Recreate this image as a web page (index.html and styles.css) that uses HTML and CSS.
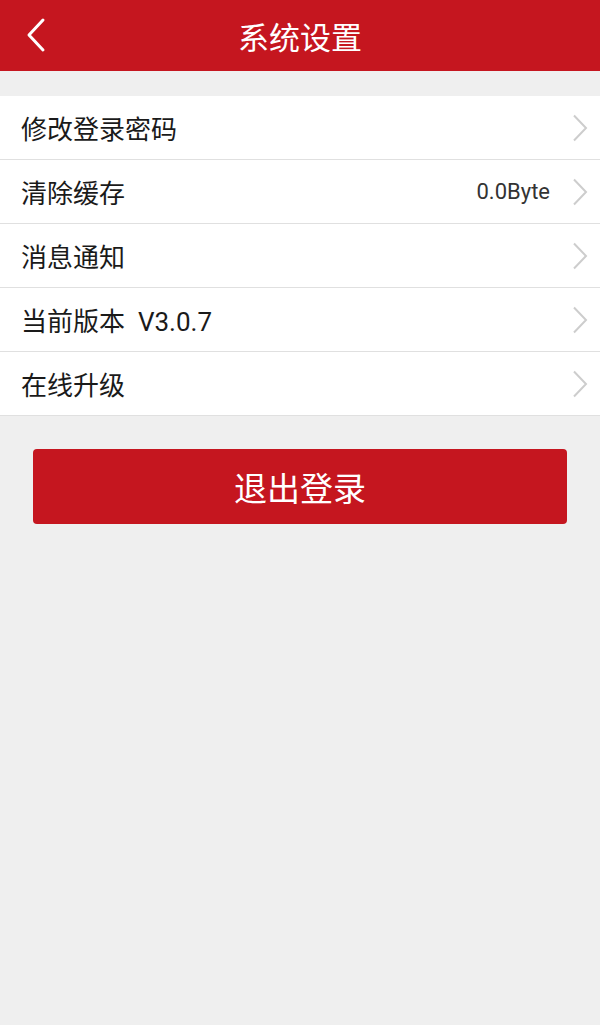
FILE: index.html
```html
<!DOCTYPE html>
<html lang="zh-CN">
<head>
    <meta charset="UTF-8">
    <meta name="viewport" content="width=device-width, initial-scale=1.0">
    <title>系统设置</title>
    <link rel="stylesheet" href="styles.css">
</head>
<body>
    <div class="header">
        <span class="back">
            <svg width="24" height="36" viewBox="0 0 24 36"><path d="M19 3 L5 18 L19 33" fill="none" stroke="#fff" stroke-width="3" stroke-linecap="round" stroke-linejoin="round"/></svg>
        </span>
        <h1>系统设置</h1>
    </div>

    <div class="list">
        <div class="row"><span class="label">修改登录密码</span><svg class="arrow" width="16" height="28" viewBox="0 0 16 28"><path d="M2 1.5 L14 14 L2 26.5" fill="none" stroke="#cdcdcd" stroke-width="2"/></svg></div>
        <div class="row"><span class="label">清除缓存</span><span class="value">0.0Byte</span><svg class="arrow" width="16" height="28" viewBox="0 0 16 28"><path d="M2 1.5 L14 14 L2 26.5" fill="none" stroke="#cdcdcd" stroke-width="2"/></svg></div>
        <div class="row"><span class="label">消息通知</span><svg class="arrow" width="16" height="28" viewBox="0 0 16 28"><path d="M2 1.5 L14 14 L2 26.5" fill="none" stroke="#cdcdcd" stroke-width="2"/></svg></div>
        <div class="row"><span class="label">当前版本&nbsp;&nbsp;V3.0.7</span><svg class="arrow" width="16" height="28" viewBox="0 0 16 28"><path d="M2 1.5 L14 14 L2 26.5" fill="none" stroke="#cdcdcd" stroke-width="2"/></svg></div>
        <div class="row"><span class="label">在线升级</span><svg class="arrow" width="16" height="28" viewBox="0 0 16 28"><path d="M2 1.5 L14 14 L2 26.5" fill="none" stroke="#cdcdcd" stroke-width="2"/></svg></div>
    </div>

    <button class="logout">退出登录</button>
</body>
</html>
```

FILE: styles.css
```css
body { margin: 0; background-color: #efefef; font-family: Roboto, "Noto Sans CJK SC", sans-serif; }
.header { position: relative; height: 71px; background-color: #c5161f; display: flex; align-items: center; justify-content: center; }
.header h1 { margin: 0; color: #fff; font-size: 31px; font-weight: normal; }
.back { position: absolute; left: 24px; top: 17px; }
.list { margin-top: 25px; background-color: #fff; border-bottom: 1px solid #e0e0e0; }
.row { height: 63px; display: flex; align-items: center; padding: 0 12px 0 21px; border-bottom: 1px solid #e0e0e0; }
.row:last-child { border-bottom: none; }
.label { flex: 1; font-size: 26px; color: #1a1a1a; }
.value { font-size: 22px; color: #333; margin-right: 22px; }
.arrow { display: block; }
.logout { display: block; width: 534px; height: 75px; margin: 33px auto 0; background-color: #c5161f; color: #fff; border: none; border-radius: 4px; font-size: 33px; font-family: "Noto Sans CJK SC", sans-serif; }
```
